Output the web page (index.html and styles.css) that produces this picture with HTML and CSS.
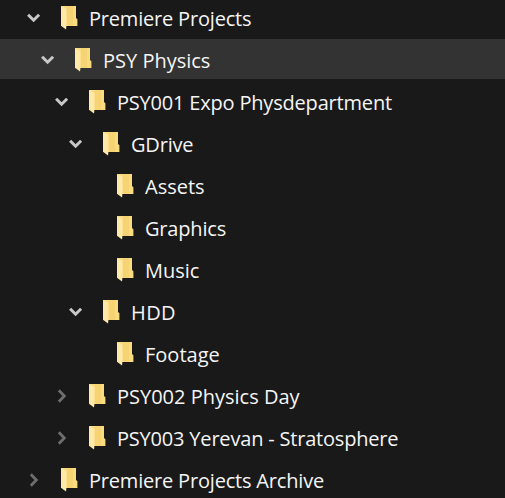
FILE: index.html
```
<!DOCTYPE html>
<html lang="en">
	<head>
		<meta charset="utf-8">
		<meta name="viewport" content="width=device-width, initial-scale=1.0">
		<title>Premiere Projects</title>
		<link rel="stylesheet" href="styles.css">
	</head>
	<body>
		<!-- shared icons -->
		<svg class="symbols" width="0" height="0">
			<symbol id="open" viewBox="0 0 14 14">
				<path d="M1.1 3.7 L6.6 9.2 L12.1 3.7" fill="none" stroke="currentColor" stroke-width="3"/>
			</symbol>
			<symbol id="closed" viewBox="0 0 14 14">
				<path d="M3.8 1.3 L9.3 7 L3.8 12.7" fill="none" stroke="currentColor" stroke-width="2.8"/>
			</symbol>
			<symbol id="folder" viewBox="0 0 17 24">
				<path d="M0 0 H15 V12 L16.4 13.2 V20 H3 Z" fill="#fadb80"/>
				<path d="M6 0 H12 V20 H6 Z" fill="#f6d373"/>
				<path d="M0 0 L5.4 3 V20 L5 23.5 L0 19.8 Z" fill="#ffe9a8"/>
			</symbol>
		</svg>

		<ul class="tree">
			<li class="row level-0">
				<svg class="arrow"><use href="#open"/></svg>
				<svg class="folder"><use href="#folder"/></svg>
				<span class="name tight">Premiere Projects</span>
			</li>
			<li class="row level-1 selected">
				<svg class="arrow"><use href="#open"/></svg>
				<svg class="folder"><use href="#folder"/></svg>
				<span class="name">PSY Physics</span>
			</li>
			<li class="row level-2">
				<svg class="arrow"><use href="#open"/></svg>
				<svg class="folder"><use href="#folder"/></svg>
				<span class="name tight">PSY001 Expo Physdepartment</span>
			</li>
			<li class="row level-3">
				<svg class="arrow"><use href="#open"/></svg>
				<svg class="folder"><use href="#folder"/></svg>
				<span class="name tight">GDrive</span>
			</li>
			<li class="row level-4">
				<svg class="arrow"></svg>
				<svg class="folder"><use href="#folder"/></svg>
				<span class="name">Assets</span>
			</li>
			<li class="row level-4">
				<svg class="arrow"></svg>
				<svg class="folder"><use href="#folder"/></svg>
				<span class="name tight">Graphics</span>
			</li>
			<li class="row level-4">
				<svg class="arrow"></svg>
				<svg class="folder"><use href="#folder"/></svg>
				<span class="name">Music</span>
			</li>
			<li class="row level-3">
				<svg class="arrow"><use href="#open"/></svg>
				<svg class="folder"><use href="#folder"/></svg>
				<span class="name wide">HDD</span>
			</li>
			<li class="row level-4">
				<svg class="arrow"></svg>
				<svg class="folder"><use href="#folder"/></svg>
				<span class="name">Footage</span>
			</li>
			<li class="row level-2">
				<svg class="arrow closed"><use href="#closed"/></svg>
				<svg class="folder"><use href="#folder"/></svg>
				<span class="name">PSY002 Physics Day</span>
			</li>
			<li class="row level-2">
				<svg class="arrow closed"><use href="#closed"/></svg>
				<svg class="folder"><use href="#folder"/></svg>
				<span class="name tight">PSY003 Yerevan - Stratosphere</span>
			</li>
			<li class="row level-0">
				<svg class="arrow closed"><use href="#closed"/></svg>
				<svg class="folder"><use href="#folder"/></svg>
				<span class="name tight">Premiere Projects Archive</span>
			</li>
		</ul>
	</body>
</html>
```
FILE: styles.css
```
body {
	margin: 0;
	overflow: hidden;
	background: #191919;
	color: #f5f5f5;
	font-family: "Open Sans", "Noto Sans", sans-serif;
	font-size: 20px;
}
.symbols {
	display: block;
}
.tree {
	margin: -3px 0 0;
	padding: 0;
	list-style: none;
}
.row {
	display: flex;
	align-items: center;
	height: 40px;
	margin-bottom: 2px;
}
.selected {
	background: #333333;
}
.level-0 {
	padding-left: 27px;
}
.level-1 {
	padding-left: 41px;
}
.level-2 {
	padding-left: 55px;
}
.level-3 {
	padding-left: 69px;
}
.level-4 {
	padding-left: 83px;
}
.arrow {
	flex: none;
	width: 14px;
	height: 14px;
	margin-top: 2px;
	color: #c8c8c8;
}
.closed {
	color: #6e6e6e;
}
.folder {
	flex: none;
	width: 17px;
	height: 24px;
	margin: 1px 11px 0 20px;
}
.name {
	padding-top: 3px;
	line-height: 40px;
	white-space: nowrap;
}
.tight {
	letter-spacing: -.19px;
}
.wide {
	letter-spacing: .4px;
}
```
